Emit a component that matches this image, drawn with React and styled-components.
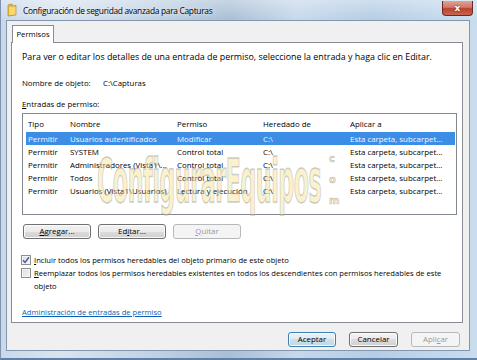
import React from "react";
import styled, { createGlobalStyle } from "styled-components";

const Global = createGlobalStyle`
  html, body { margin: 0; padding: 0; background: #fff; }
  body { font-family: "Open Sans", "Noto Sans", sans-serif; }
  * { box-sizing: border-box; }
`;

const Window = styled.div`
  position: relative;
  width: 477px;
  height: 360px;
  display: flex;
  flex-direction: column;
  overflow: hidden;
  background:
    linear-gradient(180deg, rgba(255,255,255,0.35) 0px, rgba(255,255,255,0) 20px),
    linear-gradient(90deg, #c9d9ea 0%, #d9e4ef 12%, #c3d4e5 30%, #a9bfd5 48%, #c6d8ea 62%, #b5cde4 78%, #c9ddef 100%);
  border-left: 1px solid #7d93ad;
  border-bottom: 2px solid #5f7fa6;
`;

const TitleBar = styled.div`
  height: 20px;
  flex: 0 0 20px;
  display: flex;
  align-items: center;
  padding-left: 6px;
`;

const TitleText = styled.span`
  margin-left: 6px;
  font-size: 8.4px;
  letter-spacing: -0.3px;
  color: #000;
  text-shadow: 0 0 4px rgba(255,255,255,0.9);
  white-space: nowrap;
`;

const CloseButton = styled.div`
  margin-left: auto;
  margin-right: 4px;
  margin-top: -3px;
  width: 31px;
  height: 15px;
  border: 1px solid #6b2b24;
  border-top: none;
  border-radius: 0 0 4px 4px;
  background: linear-gradient(180deg, #e1a392 0%, #d0786a 45%, #b8412e 55%, #c9654e 100%);
  display: flex;
  align-items: center;
  justify-content: center;
  color: #fff;
  font-family: "DejaVu Sans", sans-serif;
  font-weight: bold;
  font-size: 9px;
  text-shadow: 0 0 2px #6d1f12;
`;

const Client = styled.div`
  flex: 1;
  margin: 0 7px 7px 5px;
  background: #f0f0f0;
  border: 1px solid #8296ae;
  display: flex;
  flex-direction: column;
  padding: 4px 6px 0 4px;
`;

const TabStrip = styled.div`
  display: flex;
  height: 17px;
  padding-left: 1px;
  position: relative;
  z-index: 1;
`;

const Tab = styled.div`
  height: 18px;
  width: 42px;
  text-align: center;
  background: #fff;
  border: 1px solid #898c95;
  border-bottom: none;
  font-size: 7.7px;
  line-height: 16px;
  color: #000;
`;

const Panel = styled.div`
  height: 281px;
  background: #fff;
  border: 1px solid #898c95;
  display: flex;
  flex-direction: column;
  padding: 0 3px 0 10px;
  font-size: 7.8px;
  color: #000;
`;

const Para = styled.div`
  margin-top: 8px;
  line-height: 12px;
  font-size: 8.9px;
  white-space: nowrap;
`;

const NameRow = styled.div`
  margin-top: 14px;
  line-height: 12px;
  display: flex;
`;

const NameLabel = styled.span`
  width: 81px;
`;

const Label = styled.div`
  margin-top: 9px;
  line-height: 12px;
`;

const U = styled.span`
  text-decoration: underline;
`;

const ListBox = styled.div`
  margin-top: 3px;
  margin-right: 2px;
  height: 102px;
  border: 1px solid #828790;
  background: #fff;
  padding: 0 1px 0 3px;
  font-size: 7.9px;
`;

const Grid = styled.div`
  display: grid;
  grid-template-columns: 42px 107px 86px 87px 1fr;
  align-items: center;
  height: ${(p) => p.$h}px;
  padding-left: 2px;
  white-space: nowrap;
  overflow: hidden;
  color: ${(p) => (p.$sel ? "#f2f7ff" : "#000")};
  background: ${(p) => (p.$sel ? "#3b8de6" : "transparent")};
  line-height: 12px;
  padding-top: ${(p) => (p.$head ? "2px" : "0")};
`;

const Cell = styled.span`
  overflow: hidden;
  white-space: nowrap;
`;

const ButtonRow = styled.div`
  margin-top: 9px;
  display: flex;
  gap: 7px;
  padding-left: 1px;
`;

const Btn = styled.div`
  width: ${(p) => p.$w}px;
  height: 15px;
  border: 1px solid ${(p) => (p.$disabled ? "#b5b9bc" : p.$def ? "#3c7fb1" : "#707070")};
  border-radius: 3px;
  background: ${(p) =>
    p.$disabled
      ? "#f4f4f4"
      : p.$def
      ? "linear-gradient(180deg, #eaf2f8 0%, #e0ebf3 50%, #cfdfea 50%, #c4d7e6 100%)"
      : "linear-gradient(180deg, #f2f2f2 0%, #ebebeb 50%, #dddddd 50%, #cfcfcf 100%)"};
  box-shadow: inset 0 0 0 1px ${(p) => (p.$disabled ? "#f4f4f4" : "rgba(255,255,255,0.85)")};
  color: ${(p) => (p.$disabled ? "#9a9a9a" : "#000")};
  font-size: 7.9px;
  display: flex;
  align-items: center;
  justify-content: center;
  line-height: 1;
`;

const CheckRow = styled.div`
  margin-top: ${(p) => p.$mt}px;
  display: flex;
  align-items: flex-start;
  line-height: 13px;
  font-size: 7.6px;
`;

const Box = styled.div`
  flex: 0 0 10px;
  width: 10px;
  height: 10px;
  margin-top: 1px;
  margin-right: 3px;
  margin-left: -1px;
  border: 1px solid #8e8f8f;
  background: linear-gradient(135deg, #dcdcdc 0%, #f6f6f6 100%);
  box-shadow: inset 0 0 0 1px #f4f4f4;
  display: flex;
  align-items: center;
  justify-content: center;
`;

const CheckText = styled.div`
  width: 418px;
`;

const Link = styled.a`
  margin-top: 13px;
  line-height: 12px;
  font-size: 7.6px;
  color: #0b5fb5;
  text-decoration: underline;
  cursor: pointer;
  align-self: flex-start;
`;

const Footer = styled.div`
  margin-top: 9px;
  display: flex;
  justify-content: flex-end;
  gap: 13px;
  padding-right: 3px;
`;

const Watermark = styled.div`
  position: absolute;
  left: 96px;
  top: 150px;
  width: 240px;
  height: 62px;
  pointer-events: none;
  display: flex;
  align-items: center;
`;

const WmText = styled.span`
  display: inline-block;
  font-family: "DejaVu Sans Condensed", "DejaVu Sans", sans-serif;
  font-weight: bold;
  font-size: 60px;
  letter-spacing: -1px;
  color: rgba(246, 228, 160, 0.5);
  -webkit-text-stroke: 1.5px rgba(130, 130, 130, 0.4);
  transform-origin: left center;
  transform: scaleX(0.41);
  white-space: nowrap;
`;

const WmDot = styled.span`
  position: absolute;
  left: 232px;
  top: -2px;
  font-family: "DejaVu Sans", sans-serif;
  font-weight: bold;
  font-size: 10px;
  line-height: 21px;
  color: rgba(240, 214, 140, 0.55);
  -webkit-text-stroke: 0.5px rgba(120, 120, 120, 0.5);
  display: flex;
  flex-direction: column;
`;

const rows = [
  ["Permitir", "Usuarios autentificados", "Modificar", "C:\\", "Esta carpeta, subcarpet..."],
  ["Permitir", "SYSTEM", "Control total", "C:\\", "Esta carpeta, subcarpet..."],
  ["Permitir", "Administradores (Vista1\\...", "Control total", "C:\\", "Esta carpeta, subcarpet..."],
  ["Permitir", "Todos", "Control total", "C:\\", "Esta carpeta, subcarpet..."],
  ["Permitir", "Usuarios (Vista1\\Usuarios)", "Lectura y ejecución", "C:\\", "Esta carpeta, subcarpet..."],
];

function FolderIcon() {
  return (
    <svg width="10" height="14" viewBox="0 0 10 14">
      <path d="M1 2 L5 1 L5 3 L9 2.5 L9 12 L1 13 Z" fill="#e6b73c" stroke="#a77d1c" strokeWidth="0.6" />
      <path d="M2 4 L8.5 3.4 L8.5 11.5 L2 12.2 Z" fill="#f6d772" />
    </svg>
  );
}

function Check() {
  return (
    <svg width="8" height="8" viewBox="0 0 8 8">
      <path d="M1 4.2 L3 6.4 L7 1.2" fill="none" stroke="#3c5aa8" strokeWidth="1.4" />
    </svg>
  );
}

export default function App() {
  return (
    <>
      <Global />
      <Window>
        <TitleBar>
          <FolderIcon />
          <TitleText>Configuración de seguridad avanzada para Capturas</TitleText>
          <CloseButton>x</CloseButton>
        </TitleBar>
        <Client>
          <TabStrip>
            <Tab>Permisos</Tab>
          </TabStrip>
          <Panel>
            <Para>
              Para ver o editar los detalles de una entrada de permiso, seleccione la entrada y haga clic en Editar.
            </Para>
            <NameRow>
              <NameLabel>Nombre de objeto:</NameLabel>
              <span>C:\Capturas</span>
            </NameRow>
            <Label>
              <U>E</U>ntradas de permiso:
            </Label>
            <ListBox>
              <Grid $h={18} $head>
                <Cell>Tipo</Cell>
                <Cell>Nombre</Cell>
                <Cell>Permiso</Cell>
                <Cell>Heredado de</Cell>
                <Cell>Aplicar a</Cell>
              </Grid>
              {rows.map((r, i) => (
                <Grid key={i} $h={13} $sel={i === 0}>
                  {r.map((c, j) => (
                    <Cell key={j}>{c}</Cell>
                  ))}
                </Grid>
              ))}
            </ListBox>
            <ButtonRow>
              <Btn $w={68}>
                <U>A</U>gregar...
              </Btn>
              <Btn $w={68}>
                Ed<U>i</U>tar...
              </Btn>
              <Btn $w={68} $disabled>
                <U>Q</U>uitar
              </Btn>
            </ButtonRow>
            <CheckRow $mt={15}>
              <Box>
                <Check />
              </Box>
              <CheckText>
                <U>I</U>ncluir todos los permisos heredables del objeto primario de este objeto
              </CheckText>
            </CheckRow>
            <CheckRow $mt={0}>
              <Box />
              <CheckText>
                <U>R</U>eemplazar todos los permisos heredables existentes en todos los descendientes con permisos heredables de este objeto
              </CheckText>
            </CheckRow>
            <Link>Administración de entradas de permiso</Link>
          </Panel>
          <Footer>
            <Btn $w={48} $def>Aceptar</Btn>
            <Btn $w={49}>Cancelar</Btn>
            <Btn $w={49} $disabled>
              Apli<U>c</U>ar
            </Btn>
          </Footer>
        </Client>
        <Watermark>
          <WmText>ConfigurarEquipos</WmText>
          <WmDot>
            <span>c</span>
            <span>o</span>
            <span>m</span>
          </WmDot>
        </Watermark>
      </Window>
    </>
  );
}
